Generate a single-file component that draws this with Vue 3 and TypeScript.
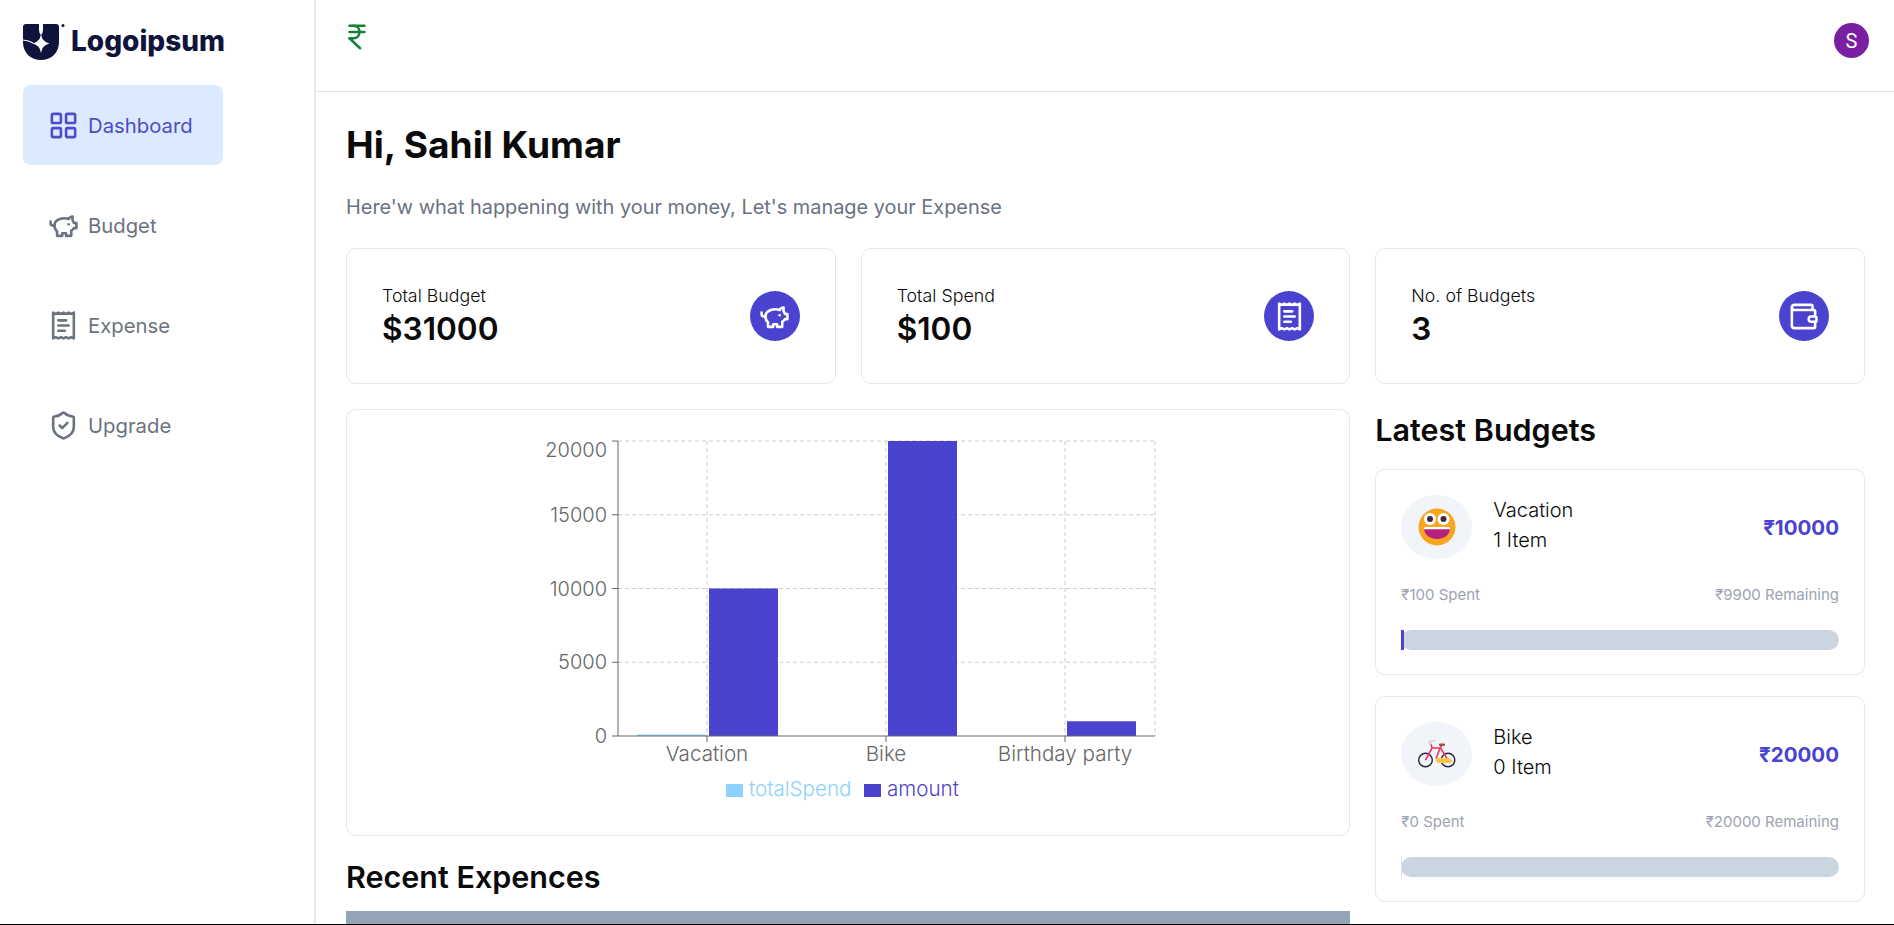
<script setup lang="ts">
const icons: Record<string, string[]> = {
  grid: [
    'M4 3h5a1 1 0 0 1 1 1v5a1 1 0 0 1-1 1H4a1 1 0 0 1-1-1V4a1 1 0 0 1 1-1z',
    'M15 3h5a1 1 0 0 1 1 1v5a1 1 0 0 1-1 1h-5a1 1 0 0 1-1-1V4a1 1 0 0 1 1-1z',
    'M15 14h5a1 1 0 0 1 1 1v5a1 1 0 0 1-1 1h-5a1 1 0 0 1-1-1v-5a1 1 0 0 1 1-1z',
    'M4 14h5a1 1 0 0 1 1 1v5a1 1 0 0 1-1 1H4a1 1 0 0 1-1-1v-5a1 1 0 0 1 1-1z',
  ],
  piggy: [
    'M19 5c-1.5 0-2.8 1.4-3 2-3.5-1.5-11-.3-11 5 0 1.8 0 3 2 4.5V20h4v-2h3v2h4v-4c1-.5 1.7-1 2-2h2v-4h-2c0-1-.5-1.5-1-2V5z',
    'M2 9v1c0 1.1.9 2 2 2h1',
    'M16 11h.01',
  ],
  receipt: [
    'M4 2v20l2-1 2 1 2-1 2 1 2-1 2 1 2-1 2 1V2l-2 1-2-1-2 1-2-1-2 1-2-1-2 1Z',
    'M14 8H8',
    'M16 12H8',
    'M13 16H8',
  ],
  shield: [
    'M20 13c0 5-3.5 7.5-7.66 8.95a1 1 0 0 1-.67-.01C7.5 20.5 4 18 4 13V6a1 1 0 0 1 1-1c2 0 4.5-1.2 6.24-2.72a1.17 1.17 0 0 1 1.52 0C14.51 3.81 17 5 19 5a1 1 0 0 1 1 1z',
    'm9 12 2 2 4-4',
  ],
  wallet: [
    'M19 7V4a1 1 0 0 0-1-1H5a2 2 0 0 0 0 4h15a1 1 0 0 1 1 1v4h-3a2 2 0 0 0 0 4h3a1 1 0 0 0 1-1v-2a1 1 0 0 0-1-1',
    'M3 5v14a2 2 0 0 0 2 2h15a1 1 0 0 0 1-1v-4',
  ],
};

const navItems = [
  { label: 'Dashboard', icon: 'grid', active: true },
  { label: 'Budget', icon: 'piggy', active: false },
  { label: 'Expense', icon: 'receipt', active: false },
  { label: 'Upgrade', icon: 'shield', active: false },
];

const stats = [
  { label: 'Total Budget', value: '$31000', icon: 'piggy' },
  { label: 'Total Spend', value: '$100', icon: 'receipt' },
  { label: 'No. of Budgets', value: '3', icon: 'wallet' },
];

const budgets = [
  { name: 'Vacation', items: '1 Item', amount: '₹10000', spent: '₹100 Spent', left: '₹9900 Remaining', emoji: 'smile', progress: 3 },
  { name: 'Bike', items: '0 Item', amount: '₹20000', spent: '₹0 Spent', left: '₹20000 Remaining', emoji: 'bike', progress: 0 },
];

// chart geometry, in page coordinates so it lines up with the grid
const plot = { left: 618, right: 1155, top: 441, bottom: 736, max: 20000 };
const yFor = (v: number) => plot.bottom - (v / plot.max) * (plot.bottom - plot.top);
const yTicks = [0, 5000, 10000, 15000, 20000];
const groupWidth = 179;
const firstCenter = 707;
const chartData = [
  { name: 'Vacation', totalSpend: 100, amount: 10000 },
  { name: 'Bike', totalSpend: 0, amount: 20000 },
  { name: 'Birthday party', totalSpend: 0, amount: 1000 },
];
const centers = chartData.map((_, i) => firstCenter + i * groupWidth);
</script>

<template>
  <div class="page">
    <div class="shell">
      <aside class="sidebar">
        <div class="logo">
          <svg class="logo-mark" width="42" height="37" viewBox="0 0 42 37">
            <path d="M0 3a3 3 0 0 1 3-3h30a3 3 0 0 1 3 3v15c0 11-8 18-18 18S0 29 0 18z" fill="#10133b" />
            <path d="M16 0h4v6q0 3-2 5q-2-2-2-5z" fill="#fff" />
            <path d="M18 10q1 8 8.500 9.500q-7.500 1.500-8.500 9.500q-1-8-8.500-9.500q7.500-1.500 8.500-9.500z" fill="#fff" />
            <path d="M0 16q6 .5 10 3" stroke="#fff" stroke-width="1.200" fill="none" />
            <circle cx="40" cy="1.500" r="1.500" fill="#10133b" />
          </svg>
          <span class="logo-text">Logoipsum</span>
        </div>
        <nav class="nav">
          <div v-for="item in navItems" :key="item.label" class="nav-item" :class="{ active: item.active }">
            <svg class="icon" width="31" height="31" viewBox="0 0 24 24">
              <path v-for="d in icons[item.icon]" :key="d" :d="d" />
            </svg>
            <span>{{ item.label }}</span>
          </div>
        </nav>
      </aside>

      <div class="content">
        <header class="topbar">
          <svg class="rupee" width="30" height="30" viewBox="0 0 24 24">
            <path d="M6 3h12" />
            <path d="M6 8h12" />
            <path d="m6 13 8.500 8" />
            <path d="M6 13h3" />
            <path d="M9 13c6.667 0 6.667-10 0-10" />
          </svg>
          <div class="avatar">S</div>
        </header>

        <main class="main">
          <h1>Hi, Sahil Kumar</h1>
          <p class="lead">Here'w what happening with your money, Let's manage your Expense</p>

          <section class="stats">
            <div v-for="s in stats" :key="s.label" class="card stat">
              <div>
                <div class="stat-label">{{ s.label }}</div>
                <div class="stat-value">{{ s.value }}</div>
              </div>
              <div class="stat-icon">
                <svg class="icon" width="31" height="31" viewBox="0 0 24 24">
                  <path v-for="d in icons[s.icon]" :key="d" :d="d" />
                </svg>
              </div>
            </div>
          </section>

          <section class="lower">
            <div class="left-col">
              <div class="card chart-card">
                <svg class="chart" width="1002" height="425" viewBox="347 410 1002 425">
                  <g class="grid-lines">
                    <line v-for="t in yTicks.slice(1)" :key="t" :x1="plot.left" :x2="plot.right" :y1="yFor(t)" :y2="yFor(t)" />
                    <line v-for="c in centers" :key="c" :x1="c" :x2="c" :y1="plot.top" :y2="plot.bottom" />
                    <line :x1="plot.right" :x2="plot.right" :y1="plot.top" :y2="plot.bottom" />
                  </g>
                  <g v-for="(d, i) in chartData" :key="d.name">
                    <rect :x="centers[i] - 70" :width="69" :y="yFor(d.totalSpend)" :height="plot.bottom - yFor(d.totalSpend)" fill="#8dd1fe" />
                    <rect :x="centers[i] + 2" :width="69" :y="yFor(d.amount)" :height="plot.bottom - yFor(d.amount)" fill="#4a43d0" />
                  </g>
                  <g class="axis">
                    <line :x1="plot.left" :x2="plot.left" :y1="plot.top" :y2="plot.bottom" />
                    <line :x1="plot.left" :x2="plot.right" :y1="plot.bottom" :y2="plot.bottom" />
                    <line v-for="t in yTicks" :key="t" :x1="plot.left - 6" :x2="plot.left" :y1="yFor(t)" :y2="yFor(t)" />
                    <line v-for="c in centers" :key="c" :x1="c" :x2="c" :y1="plot.bottom" :y2="plot.bottom + 6" />
                  </g>
                  <text v-for="t in yTicks" :key="t" class="tick" text-anchor="end" x="607" :y="Math.max(yFor(t), 450) + 7">{{ t }}</text>
                  <text v-for="(d, i) in chartData" :key="d.name" class="tick cat" text-anchor="middle" :x="centers[i]" y="761">{{ d.name }}</text>
                  <rect x="726" y="784" width="17" height="13" fill="#8dd1fe" />
                  <text class="legend" x="749" y="796" fill="#8dd1fe">totalSpend</text>
                  <rect x="864" y="784" width="17" height="13" fill="#4a43d0" />
                  <text class="legend" x="887" y="796" fill="#4a43d0">amount</text>
                </svg>
              </div>
              <h2 class="recent-title">Recent Expences</h2>
              <div class="table-head"></div>
            </div>

            <div class="right-col">
              <h2 class="latest-title">Latest Budgets</h2>
              <div class="budget-list">
                <div v-for="b in budgets" :key="b.name" class="card budget">
                  <div class="budget-top">
                    <div class="budget-emoji">
                      <svg v-if="b.emoji === 'smile'" width="38" height="38" viewBox="0 0 38 38">
                        <circle cx="19" cy="19" r="18.500" fill="#f8a51f" />
                        <path d="M7 19h24q1 0 1 1c0 7-6 11-13 11S6 27 6 20q0-1 1-1z" fill="#b4217f" />
                        <path d="M7 19h24q1 0 1 1v1.200H6V20q0-1 1-1z" fill="#fff" />
                        <circle cx="12" cy="11" r="6" fill="#fff" />
                        <circle cx="25.500" cy="11" r="6" fill="#fff" />
                        <circle cx="12" cy="11" r="3" fill="#43263c" />
                        <circle cx="25.500" cy="11" r="3" fill="#43263c" />
                      </svg>
                      <svg v-else width="38" height="30" viewBox="0 0 38 30">
                        <circle cx="7.500" cy="21" r="6.800" fill="none" stroke="#26233f" stroke-width="1.400" />
                        <circle cx="30" cy="21" r="6.800" fill="none" stroke="#26233f" stroke-width="1.400" />
                        <path d="M7.500 21l6.500-12 8.500 0 7.500 12M14 9l-1-4M24 6l-2 3-4 11" fill="none" stroke="#ea3568" stroke-width="1.600" />
                        <path d="M18 19h13l4 3q-1 2-4 2H20q-3-2-2-5z" fill="#f7c74a" />
                        <path d="M10 3q3-3 7-2l1 1-4 1-1 3h-2z" fill="#d5d8de" />
                        <rect x="21" y="4.500" width="6" height="2.500" rx="1" fill="#a8523a" />
                      </svg>
                    </div>
                    <div class="budget-info">
                      <div>{{ b.name }}</div>
                      <div>{{ b.items }}</div>
                    </div>
                    <div class="budget-amount">{{ b.amount }}</div>
                  </div>
                  <div class="budget-meta">
                    <span>{{ b.spent }}</span>
                    <span>{{ b.left }}</span>
                  </div>
                  <div class="track">
                    <div class="fill" :class="{ empty: !b.progress }" :style="{ width: b.progress + 'px' }"></div>
                  </div>
                </div>
              </div>
            </div>
          </section>
        </main>
      </div>
    </div>
    <div class="edge"></div>
  </div>
</template>

<style>
html,
body {
  margin: 0;
  background: #fff;
}
</style>

<style scoped>
* {
  box-sizing: border-box;
}

.page {
  height: 925px;
  display: flex;
  flex-direction: column;
  overflow: hidden;
  font-family: Inter, 'Liberation Sans', sans-serif;
  color: #0a0a0a;
  background: #fff;
}

.shell {
  flex: 1;
  min-height: 0;
  display: flex;
}

.edge {
  height: 1px;
  background: #000;
}

.sidebar {
  width: 316px;
  flex-shrink: 0;
  padding: 24px 23px 0;
  border-right: 2px solid #e5e7eb;
}

.logo {
  display: flex;
  align-items: center;
  height: 36px;
  gap: 6px;
  margin-bottom: 25px;
}

.logo-mark {
  flex-shrink: 0;
}

.logo-text {
  margin-top: -2px;
  font-size: 28px;
  font-weight: 800;
  color: #10133b;
}

.nav {
  display: flex;
  flex-direction: column;
  gap: 20px;
  width: 200px;
}

.nav-item {
  height: 80px;
  padding-left: 25px;
  display: flex;
  align-items: center;
  gap: 9px;
  border-radius: 8px;
  font-size: 20.3px;
  font-weight: 400;
  color: #6b7280;
}

.nav-item.active {
  background: #dbeafe;
  color: #4f4bc9;
}

.icon,
.rupee {
  fill: none;
  stroke: currentColor;
  stroke-width: 2;
  stroke-linecap: round;
  stroke-linejoin: round;
  flex-shrink: 0;
}

.content {
  flex: 1;
  min-width: 0;
  display: flex;
  flex-direction: column;
}

.topbar {
  height: 92px;
  flex-shrink: 0;
  display: flex;
  justify-content: space-between;
  align-items: flex-start;
  padding: 22px 25px 0 26px;
  border-bottom: 1px solid #e2e4e8;
}

.rupee {
  color: #15803d;
}

.avatar {
  width: 35px;
  height: 35px;
  margin-top: 1px;
  border-radius: 50%;
  background: #7b1fa2;
  color: #fff;
  display: flex;
  align-items: center;
  justify-content: center;
  font-family: Roboto, sans-serif;
  font-size: 20px;
}

.main {
  flex: 1;
  min-height: 0;
  overflow: hidden;
  padding: 31px 29px 0 30px;
}

h1 {
  margin: 0;
  font-size: 37.1px;
  line-height: 44px;
  font-weight: 700;
}

.lead {
  margin: 25px 0 26px;
  font-size: 19.9px;
  line-height: 30px;
  color: #6b7280;
}

.stats,
.lower {
  display: grid;
  grid-template-columns: repeat(3, 1fr);
  column-gap: 25px;
}

.card {
  background: #fff;
  border: 1px solid #e5e7eb;
  border-radius: 10px;
}

.stat {
  height: 136px;
  padding: 0 35px;
  display: flex;
  align-items: center;
  justify-content: space-between;
}

.stat-label {
  font-size: 17.8px;
  line-height: 24px;
  font-weight: 300;
}

.stat-value {
  margin-top: 1px;
  font-size: 31.6px;
  line-height: 40px;
  font-weight: 600;
}

.stat-icon {
  width: 50px;
  height: 50px;
  border-radius: 50%;
  background: #4a43d0;
  color: #fff;
  display: flex;
  align-items: center;
  justify-content: center;
}

.lower {
  margin-top: 25px;
  align-items: start;
}

.left-col {
  grid-column: span 2;
}

.chart-card {
  height: 427px;
}

.chart {
  display: block;
}

.grid-lines line {
  stroke: #ccc;
  stroke-width: 1;
  stroke-dasharray: 4 3;
}

.axis line {
  stroke: #666;
  stroke-width: 1;
}

.tick {
  font-size: 20px;
  font-weight: 300;
  fill: #666;
}

.tick.cat {
  font-size: 20.6px;
}

.legend {
  font-size: 20.6px;
  font-weight: 300;
}

h2 {
  margin: 0;
  font-size: 30.5px;
  line-height: 42px;
  font-weight: 600;
}

.recent-title {
  margin: 20px 0 13px;
}

.table-head {
  height: 44px;
  background: #94a3b8;
}

.latest-title {
  margin-bottom: 18px;
}

.budget-list {
  display: flex;
  flex-direction: column;
  gap: 21px;
}

.budget {
  height: 206px;
  padding: 25px 25px 0;
}

.budget-top {
  display: flex;
  align-items: center;
  gap: 21px;
}

.budget-emoji {
  width: 71px;
  height: 64px;
  flex-shrink: 0;
  border-radius: 50%;
  background: #f1f5f9;
  display: flex;
  align-items: center;
  justify-content: center;
}

.budget-info {
  flex: 1;
  padding-bottom: 4px;
  font-size: 20px;
  line-height: 30px;
  font-weight: 300;
}

.budget-amount {
  font-size: 20.5px;
  font-weight: 700;
  color: #4a43d0;
}

.budget-meta {
  display: flex;
  justify-content: space-between;
  margin-top: 26px;
  font-size: 15px;
  line-height: 20px;
  color: #9ca3af;
}

.track {
  height: 20px;
  margin-top: 25px;
  border-radius: 10px;
  background: #cbd5e1;
}

.fill {
  height: 100%;
  background: #4a43d0;
}

.fill.empty {
  width: 1px !important;
  background: #dde3ea;
}
</style>
